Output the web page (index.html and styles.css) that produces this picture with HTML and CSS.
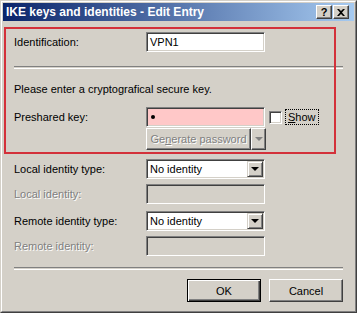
FILE: index.html
```html
<!DOCTYPE html>
<html lang="en">
<head>
    <meta charset="UTF-8">
    <title>IKE keys and identities - Edit Entry</title>
    <link rel="stylesheet" href="styles.css">
</head>
<body>
    <div class="window">
        <div class="frame">
            <div class="titlebar">
                <span class="title">IKE keys and identities - Edit Entry</span>
                <span class="tbtn help">?</span>
                <span class="tbtn close">
                    <svg width="8" height="7" viewBox="0 0 8 7"><path d="M0 0h2l2 2 2-2h2L5 3.5 8 7H6L4 5 2 7H0l3-3.5z" fill="#000"/></svg>
                </span>
            </div>

            <div class="content">
                <div class="row first">
                    <label class="lbl">Identification:</label>
                    <div class="edit">VPN1</div>
                </div>

                <div class="sep"></div>

                <p class="hint">Please enter a cryptografical secure key.</p>

                <div class="row key-row">
                    <label class="lbl">Preshared key:</label>
                    <div class="edit pink"><span class="dot"></span></div>
                    <span class="check"></span>
                    <span class="show"><u>S</u>how</span>
                </div>

                <div class="row gen-row">
                    <span class="lbl"></span>
                    <div class="splitbtn">
                        <span class="gen">Ge<u>n</u>erate password</span>
                        <span class="gen-arrow"><span class="tri grey"></span></span>
                    </div>
                </div>

                <div class="row combo-row">
                    <label class="lbl">Local identity type:</label>
                    <div class="combo">
                        <span class="combo-text">No identity</span>
                        <span class="combo-btn"><span class="tri"></span></span>
                    </div>
                </div>

                <div class="row">
                    <label class="lbl disabled">Local identity:</label>
                    <div class="edit off"></div>
                </div>

                <div class="row combo-row second">
                    <label class="lbl">Remote identity type:</label>
                    <div class="combo">
                        <span class="combo-text">No identity</span>
                        <span class="combo-btn"><span class="tri"></span></span>
                    </div>
                </div>

                <div class="row">
                    <label class="lbl disabled">Remote identity:</label>
                    <div class="edit off"></div>
                </div>

                <div class="sep bottom"></div>

                <div class="buttons">
                    <button class="btn default">OK</button>
                    <button class="btn">Cancel</button>
                </div>
            </div>
        </div>

        <!-- red annotation drawn over the key section -->
        <div class="highlight"></div>
    </div>
</body>
</html>
```

FILE: styles.css
```css
body {
    margin: 0;
    font-family: "Liberation Sans", Arial, sans-serif;
    font-size: 11px;
    color: #000;
}
.window {
    position: relative;
    width: 357px;
    height: 313px;
    box-sizing: border-box;
    background: #d4d0c8;
    border: 1px solid;
    border-color: #d4d0c8 #404040 #404040 #d4d0c8;
}
.frame {
    height: 100%;
    box-sizing: border-box;
    border: 1px solid;
    border-color: #fff #808080 #808080 #fff;
    padding: 1px;
}
.titlebar {
    height: 18px;
    display: flex;
    align-items: center;
    padding: 0 5px 0 2px;
    background: linear-gradient(to right, #0a246a, #a6caf0);
    color: #fff;
    font-size: 12px;
    font-weight: bold;
}
.title {
    flex: 1;
    padding-left: 1px;
}
.tbtn {
    width: 16px;
    height: 14px;
    box-sizing: border-box;
    display: flex;
    align-items: center;
    justify-content: center;
    background: #d4d0c8;
    color: #000;
    font-size: 11px;
    border: 1px solid;
    border-color: #fff #404040 #404040 #fff;
    box-shadow: inset -1px -1px 0 #808080;
}
.help {
    margin-right: 1px;
}
.content {
    padding: 0 11px;
}
.row {
    display: flex;
    align-items: center;
    margin-top: 5px;
}
.row.first {
    margin-top: 11px;
}
.row.key-row {
    margin-top: 11px;
}
.lbl {
    width: 132px;
    flex: none;
}
.lbl.disabled {
    color: #808080;
    text-shadow: 1px 1px 0 #fff;
}
.edit {
    width: 119px;
    height: 20px;
    box-sizing: border-box;
    display: flex;
    align-items: center;
    padding-left: 3px;
    background: #fff;
    border: 1px solid;
    border-color: #808080 #fff #fff #808080;
    box-shadow: inset 1px 1px 0 #404040, inset -1px -1px 0 #d4d0c8;
}
.edit.pink {
    background: #ffc8c8;
}
.edit.off {
    background: #d4d0c8;
}
.dot {
    width: 4px;
    height: 4px;
    margin-left: 1px;
    border-radius: 50%;
    background: #000;
}
.check {
    width: 13px;
    height: 13px;
    box-sizing: border-box;
    margin-left: 4px;
    background: #fff;
    border: 1px solid;
    border-color: #808080 #fff #fff #808080;
    box-shadow: inset 1px 1px 0 #404040, inset -1px -1px 0 #d4d0c8;
}
.show {
    margin-left: 4px;
    padding: 1px 2px;
    outline: 1px dotted #000;
}
.sep {
    height: 1px;
    margin-top: 14px;
    border-top: 1px solid #808080;
    border-bottom: 1px solid #fff;
}
.hint {
    margin: 14px 0 0;
    line-height: 13px;
}
.gen-row {
    margin-top: 1px;
}
.splitbtn {
    width: 120px;
    height: 22px;
    display: flex;
}
.gen, .gen-arrow {
    box-sizing: border-box;
    display: flex;
    align-items: center;
    justify-content: center;
    border: 1px solid;
    border-color: #fff #404040 #404040 #fff;
    box-shadow: inset -1px -1px 0 #808080;
    color: #808080;
    text-shadow: 1px 1px 0 #fff;
}
.gen {
    flex: 1;
}
.gen-arrow {
    width: 15px;
}
.tri {
    width: 0;
    height: 0;
    border-left: 4px solid transparent;
    border-right: 4px solid transparent;
    border-top: 4px solid #000;
}
.tri.grey {
    border-top-color: #808080;
}
.combo-row {
    margin-top: 9px;
}
.combo-row.second {
    margin-top: 7px;
}
.combo {
    width: 119px;
    height: 20px;
    box-sizing: border-box;
    display: flex;
    align-items: center;
    padding: 0 1px 0 3px;
    background: #fff;
    border: 1px solid;
    border-color: #808080 #fff #fff #808080;
    box-shadow: inset 1px 1px 0 #404040, inset -1px -1px 0 #d4d0c8;
}
.combo-text {
    flex: 1;
}
.combo-btn {
    width: 16px;
    height: 16px;
    box-sizing: border-box;
    display: flex;
    align-items: center;
    justify-content: center;
    background: #d4d0c8;
    border: 1px solid;
    border-color: #d4d0c8 #404040 #404040 #d4d0c8;
    box-shadow: inset 1px 1px 0 #fff, inset -1px -1px 0 #808080;
}
.sep.bottom {
    margin-top: 11px;
}
.buttons {
    display: flex;
    justify-content: flex-end;
    gap: 8px;
    margin-top: 9px;
}
.btn {
    width: 74px;
    height: 23px;
    font-family: inherit;
    font-size: 11px;
    background: #d4d0c8;
    border: 1px solid;
    border-color: #fff #404040 #404040 #fff;
    box-shadow: inset -1px -1px 0 #808080;
    padding: 0;
}
.btn.default {
    border: 1px solid #000;
    box-shadow: inset 1px 1px 0 #fff, inset -1px -1px 0 #404040, inset -2px -2px 0 #808080;
}
.highlight {
    position: absolute;
    left: 3px;
    top: 26px;
    width: 332px;
    height: 127px;
    box-sizing: border-box;
    border: 2px solid #d3313a;
}
```
